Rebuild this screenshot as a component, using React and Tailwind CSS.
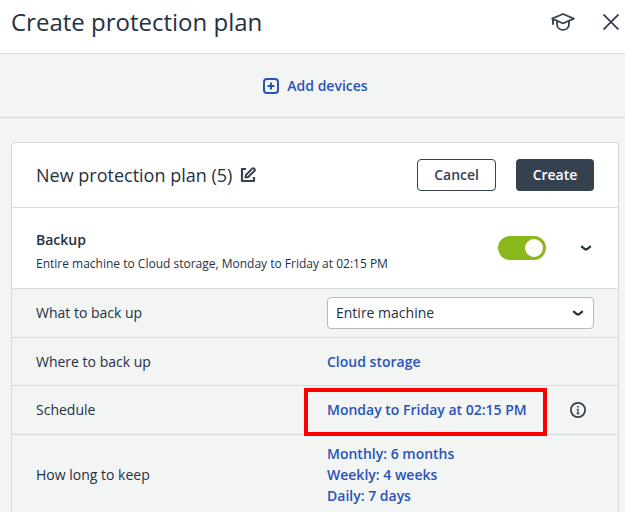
import React, { useState } from 'react'

const keepRules = ['Monthly: 6 months', 'Weekly: 4 weeks', 'Daily: 7 days']

function CapIcon() {
  return (
    <svg width="24" height="20" viewBox="0 0 24 20" fill="none" stroke="currentColor" strokeWidth="1.8" strokeLinejoin="round" strokeLinecap="round">
      <path d="M12 2 L22.8 6.6 L13.5 10.8 Q12 11.4 10.5 10.8 L1.2 6.6 Z" />
      <path d="M2 7 V12" strokeWidth="1.9" />
      <path d="M6 9.4 V12 C6 19.8 18 19.8 18 12 V9.4" />
    </svg>
  )
}

function CloseIcon() {
  return (
    <svg width="16" height="16" viewBox="0 0 16 16" fill="none" stroke="currentColor" strokeWidth="1.8">
      <path d="M0.5 0.5 L15.5 15.5 M15.5 0.5 L0.5 15.5" />
    </svg>
  )
}

function PlusIcon() {
  return (
    <svg width="16" height="16" viewBox="0 0 16 16" fill="none" stroke="currentColor" strokeWidth="2">
      <rect x="1" y="1" width="14" height="14" rx="3" />
      <path d="M8 4.5 V11.5 M4.5 8 H11.5" />
    </svg>
  )
}

function EditIcon() {
  return (
    <svg width="16" height="16" viewBox="0 0 16 16" fill="none" stroke="currentColor">
      <path d="M6 2 H2 V14 H14 V10" strokeWidth="2.2" strokeLinejoin="round" />
      <path d="M5.4 10.6 L6 8 L12.2 1.6 Q13.2 0.8 14.4 1.8 Q15.4 2.8 14.6 3.8 L8.2 10 Z" strokeWidth="1.9" strokeLinejoin="round" />
    </svg>
  )
}

function ChevronIcon() {
  return (
    <svg width="16" height="16" viewBox="0 0 16 16" fill="none" stroke="currentColor" strokeWidth="2.2">
      <path d="M3.2 6.2 L6.8 9 Q8 9.8 9.2 9 L12.8 6.2" />
    </svg>
  )
}

function InfoIcon() {
  return (
    <svg width="16" height="16" viewBox="0 0 16 16" fill="none" stroke="currentColor">
      <circle cx="8" cy="8" r="7.1" strokeWidth="1.8" />
      <path d="M8 4 V5.6" strokeWidth="1.6" />
      <path d="M6.8 7.5 H8 V11.8 M6.6 11.5 H9.4" strokeWidth="1.3" />
    </svg>
  )
}

export default function App() {
  const [enabled, setEnabled] = useState(true)

  return (
    <div className="min-h-screen bg-[#f3f5f5] font-['Open_Sans','Noto_Sans',sans-serif] text-sm text-[#243143]">
      <header className="flex h-[54px] items-start justify-between border-b border-[#d9dddd] bg-white pl-[11px] pr-1.5 pt-1.5">
        <h1 className="text-2xl leading-8">Create protection plan</h1>
        <div className="flex h-8 items-center gap-7 text-[#35414f]">
          <button type="button" aria-label="Learn more"><CapIcon /></button>
          <button type="button" aria-label="Close"><CloseIcon /></button>
        </div>
      </header>

      <div className="flex h-16 items-center justify-center border-b border-[#d5d9d9] pl-1.5">
        <button type="button" className="flex items-center gap-2 font-semibold text-[#2853ba]">
          <PlusIcon />
          Add devices
        </button>
      </div>

      <main className="pl-[11px] pr-1.5 pt-6">
        <section className="rounded-t border border-b-0 border-[#d5d9d9]">
          <div className="flex h-[65px] items-center justify-between rounded-t border-b border-[#d9dddd] bg-white px-6">
            <div className="flex items-center gap-2">
              <h2 className="text-lg">New protection plan (5)</h2>
              <button type="button" aria-label="Rename plan" className="text-[#35414f]"><EditIcon /></button>
            </div>
            <div className="flex gap-5 font-semibold">
              <button type="button" className="h-8 min-w-[78px] rounded border border-[#35414f] px-4 text-[#35414f]">Cancel</button>
              <button type="button" className="h-8 min-w-[78px] rounded bg-[#35414f] px-4 text-white">Create</button>
            </div>
          </div>

          <div className="flex h-[81px] items-center justify-between border-b border-[#d9dddd] bg-white px-6">
            <div className="pt-2">
              <h3 className="font-semibold leading-6">Backup</h3>
              <p className="text-xs leading-6">Entire machine to Cloud storage, Monday to Friday at 02:15 PM</p>
            </div>
            <div className="flex items-center gap-8">
              <label className="flex cursor-pointer">
                <input
                  type="checkbox"
                  aria-label="Backup"
                  checked={enabled}
                  onChange={(e) => setEnabled(e.target.checked)}
                  className="peer sr-only"
                />
                <span className="flex h-6 w-12 items-center rounded-full bg-gray-300 px-[3px] peer-checked:justify-end peer-checked:bg-[#8ab81c]">
                  <span className="size-[18px] rounded-full bg-white" />
                </span>
              </label>
              <button type="button" aria-label="Collapse"><ChevronIcon /></button>
            </div>
          </div>

          <div className="grid h-[49px] grid-cols-[291px_1fr] items-center border-b border-[#d5d9d9] px-6">
            <label htmlFor="what">What to back up</label>
            <div className="relative">
              <select id="what" className="h-8 w-full appearance-none rounded border border-[#b4babd] bg-white px-2">
                <option>Entire machine</option>
              </select>
              <span className="pointer-events-none absolute right-2 top-2"><ChevronIcon /></span>
            </div>
          </div>

          <div className="grid h-12 grid-cols-[291px_1fr] items-center border-b border-[#d5d9d9] px-6">
            <span>Where to back up</span>
            <a href="#storage" className="font-semibold text-[#2853ba]">Cloud storage</a>
          </div>

          <div className="grid h-[49px] grid-cols-[291px_1fr] items-center border-b border-[#d5d9d9] px-6">
            <span>Schedule</span>
            <div className="flex items-center justify-between pr-2">
              <div className="relative">
                <a href="#schedule" className="font-semibold text-[#2853ba]">Monday to Friday at 02:15 PM</a>
                <div className="pointer-events-none absolute -bottom-4 -left-[23px] -right-5 -top-3 border-4 border-[#fe0000]" />
              </div>
              <button type="button" aria-label="Schedule info" className="text-[#35414f]"><InfoIcon /></button>
            </div>
          </div>

          <div className="grid grid-cols-[291px_1fr] items-center px-6 py-2">
            <span>How long to keep</span>
            <a href="#retention" className="font-semibold text-[#2853ba]">
              {keepRules.map((rule) => (
                <span key={rule} className="block leading-[21px]">{rule}</span>
              ))}
            </a>
          </div>
        </section>
      </main>
    </div>
  )
}
